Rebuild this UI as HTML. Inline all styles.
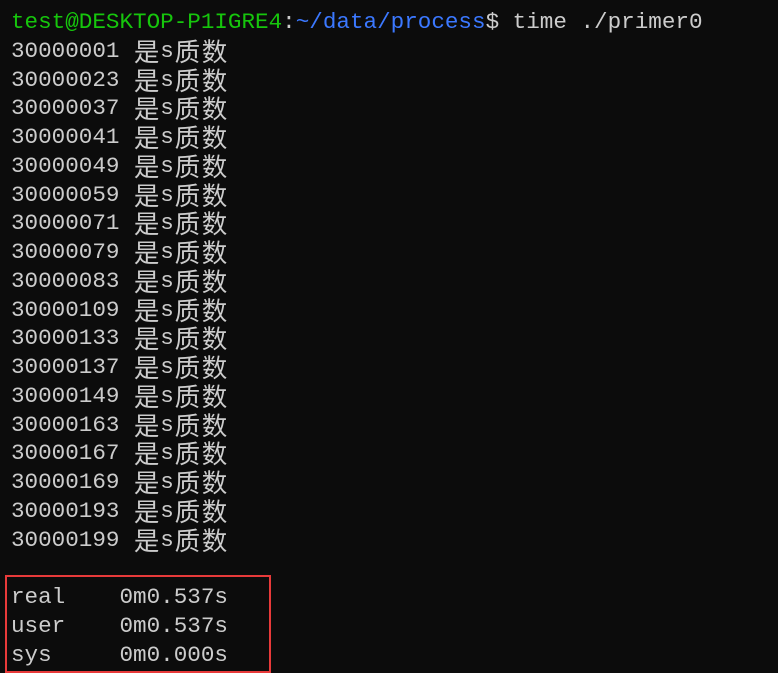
<!DOCTYPE html>
<html><head><meta charset="utf-8"><style>
body{margin:0;background:#0c0c0c;width:778px;height:673px;overflow:hidden;position:relative}
.t{position:absolute;left:11px;top:8px;font-family:"Liberation Mono",monospace;font-size:22.6px;color:#cccccc}
.t div{height:28.75px;line-height:28.75px;overflow:visible;white-space:pre}
.c{display:inline-block;width:27.2px;height:28.75px;line-height:28.75px;vertical-align:top;text-align:center;font-family:"Noto Sans CJK SC",sans-serif;font-size:25.5px}
.g{color:#16c60c}.b{color:#3b78ff}
.box{position:absolute;left:5px;top:575px;width:262px;height:94px;border:2px solid #e83a3a}
</style></head><body>
<div class="t"><div><span class="g">test@DESKTOP-P1IGRE4</span>:<span class="b">~/data/process</span>$ time ./primer0</div><div>30000001 <span class="c">是</span>s<span class="c">质</span><span class="c">数</span></div><div>30000023 <span class="c">是</span>s<span class="c">质</span><span class="c">数</span></div><div>30000037 <span class="c">是</span>s<span class="c">质</span><span class="c">数</span></div><div>30000041 <span class="c">是</span>s<span class="c">质</span><span class="c">数</span></div><div>30000049 <span class="c">是</span>s<span class="c">质</span><span class="c">数</span></div><div>30000059 <span class="c">是</span>s<span class="c">质</span><span class="c">数</span></div><div>30000071 <span class="c">是</span>s<span class="c">质</span><span class="c">数</span></div><div>30000079 <span class="c">是</span>s<span class="c">质</span><span class="c">数</span></div><div>30000083 <span class="c">是</span>s<span class="c">质</span><span class="c">数</span></div><div>30000109 <span class="c">是</span>s<span class="c">质</span><span class="c">数</span></div><div>30000133 <span class="c">是</span>s<span class="c">质</span><span class="c">数</span></div><div>30000137 <span class="c">是</span>s<span class="c">质</span><span class="c">数</span></div><div>30000149 <span class="c">是</span>s<span class="c">质</span><span class="c">数</span></div><div>30000163 <span class="c">是</span>s<span class="c">质</span><span class="c">数</span></div><div>30000167 <span class="c">是</span>s<span class="c">质</span><span class="c">数</span></div><div>30000169 <span class="c">是</span>s<span class="c">质</span><span class="c">数</span></div><div>30000193 <span class="c">是</span>s<span class="c">质</span><span class="c">数</span></div><div>30000199 <span class="c">是</span>s<span class="c">质</span><span class="c">数</span></div><div> </div><div>real    0m0.537s</div><div>user    0m0.537s</div><div>sys     0m0.000s</div></div>
<div class="box"></div>
</body></html>
